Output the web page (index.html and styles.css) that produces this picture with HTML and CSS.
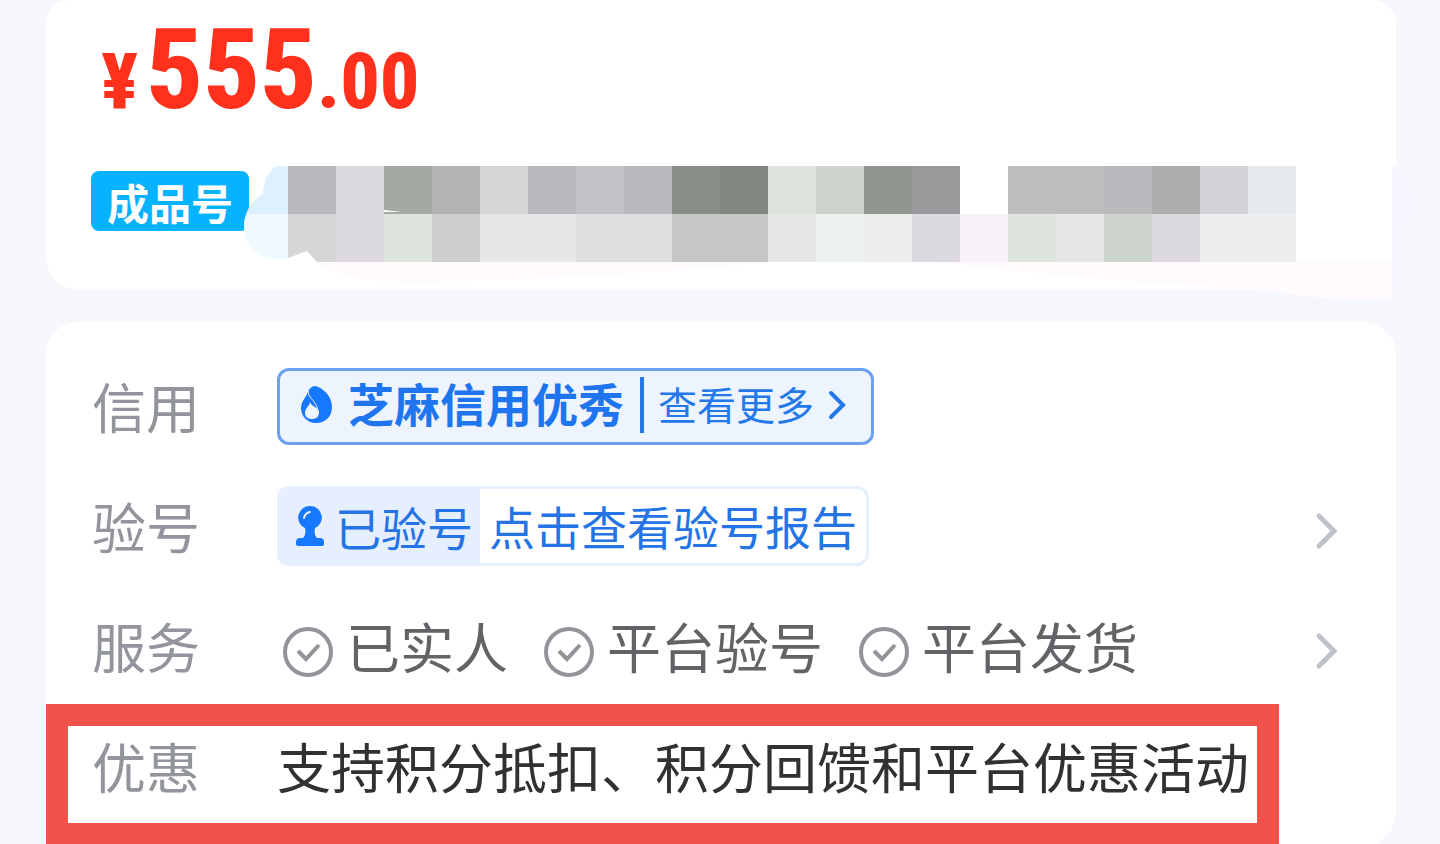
FILE: index.html
```html
<!DOCTYPE html>
<html lang="zh-CN">

<head>
    <meta charset="UTF-8">
    <meta name="viewport" content="width=device-width, initial-scale=1.0">
    <title>商品详情</title>
    <link rel="stylesheet" href="styles.css">
</head>

<body>
    <main class="page">
        <section class="card summary">
            <p class="price"><span class="price-small currency">¥</span>555<span class="price-small">.00</span></p>
            <div class="title-row">
                <span class="tag">成品号</span>
                <svg class="mosaic" viewBox="0 0 1184 144" width="1184" height="144" aria-hidden="true">
                    <!-- soft brush edges around the blocks -->
                    <path d="M72 96C110 122 180 116 240 114C360 110 440 104 530 96Z" fill="#fefafe" />
                    <path d="M690 96C780 106 860 114 960 120C1060 126 1100 140 1148 132V96Z" fill="#fefafe" />
                    <path d="M1148 0C1176 6 1182 50 1156 68C1166 90 1162 112 1148 132Z" fill="#f6f6fe" />
                    <path d="M44 0H32C22 8 19 18 19 28C8 34 0 46 0 60L4 48H44Z" fill="#dcf0ff" />
                    <path d="M4 48H44V92C18 98 0 82 0 60Q0 53 4 48Z" fill="#effaff" />
                    <g shape-rendering="crispEdges">
                        <path d="M44 0h48v48H44z" fill="#bbb8bd" />
                        <path d="M92 0h48v96H92z" fill="#dddadf" />
                        <path d="M140 0h48v48h-48z" fill="#a4a9a3" />
                        <path d="M188 0h48v48h-48z" fill="#b3b3b3" />
                        <path d="M236 0h48v48h-48z" fill="#d6d6d6" />
                        <path d="M284 0h48v48h-48z" fill="#bbb8bd" />
                        <path d="M332 0h48v48h-48z" fill="#c5c2c7" />
                        <path d="M380 0h48v48h-48z" fill="#bbb8bd" />
                        <path d="M428 0h48v48h-48z" fill="#8a8e89" />
                        <path d="M476 0h48v48h-48z" fill="#828680" />
                        <path d="M524 0h48v48h-48z" fill="#dde3dd" />
                        <path d="M572 0h48v48h-48z" fill="#cdd3cd" />
                        <path d="M620 0h48v48h-48z" fill="#929691" />
                        <path d="M668 0h48v48h-48z" fill="#9c999d" />
                        <path d="M764 0h96v48h-96z" fill="#bdbdbd" />
                        <path d="M860 0h48v48h-48z" fill="#bbb8bd" />
                        <path d="M908 0h48v48h-48z" fill="#adadad" />
                        <path d="M956 0h48v48h-48z" fill="#d5d2d7" />
                        <path d="M1004 0h48v48h-48z" fill="#e6eaef" />
                        <path d="M44 48h48v48H44z" fill="#d6d6d6" />
                        <path d="M140 48h48v48h-48z" fill="#dde3dd" />
                        <path d="M188 48h48v48h-48z" fill="#cfcfcf" />
                        <path d="M236 48h96v48h-96z" fill="#e7e7e7" />
                        <path d="M332 48h96v48h-96z" fill="#dedede" />
                        <path d="M428 48h96v48h-96z" fill="#c6c6c6" />
                        <path d="M524 48h48v48h-48z" fill="#e6e6e6" />
                        <path d="M572 48h48v48h-48z" fill="#edf2ee" />
                        <path d="M620 48h48v48h-48z" fill="#eeeeee" />
                        <path d="M668 48h48v48h-48z" fill="#dddadf" />
                        <path d="M716 48h48v48h-48z" fill="#f7f2f7" />
                        <path d="M764 48h48v48h-48z" fill="#dde3dd" />
                        <path d="M812 48h48v48h-48z" fill="#e6e6e6" />
                        <path d="M860 48h48v48h-48z" fill="#cdd3cd" />
                        <path d="M908 48h48v48h-48z" fill="#dddadf" />
                        <path d="M956 48h96v48h-96z" fill="#eeeeee" />
                    </g>
                    <path d="M44 92L63 85L74 97H44Z" fill="#ffffff" />
                    <path d="M140 44L158 46H140Z" fill="#ffffff" />
                </svg>
            </div>
        </section>

        <section class="card details">
            <div class="row">
                <span class="label">信用</span>
                <a class="credit" href="#">
                    <svg class="drop" viewBox="0 0 32 38" width="32" height="38" aria-hidden="true">
                        <path d="M15 0C24 2 32 11 32 21C32 31 25 37 16 37C7 37 1 30 1 22C1 15 6 12 8 6C9 3 12 0 15 0Z" fill="#1677ff" />
                        <path d="M10 16C9 21 5 22 5 27C5 31 8 33 12 33C16 33 19 31 19 26C18 21 12 21 10 16Z" fill="#eef4fe" />
                        <path d="M8 5C8 13 18 15 18 27" fill="none" stroke="#eef4fe" stroke-width="1" />
                    </svg>
                    <strong class="credit-level">芝麻信用优秀</strong>
                    <span class="credit-more">查看更多</span>
                    <svg viewBox="0 0 20 30" width="20" height="30" aria-hidden="true">
                        <path d="M3 3L15 15L3 27" fill="none" stroke="#2478ea" stroke-width="4" stroke-linecap="round" />
                    </svg>
                </a>
            </div>
            <div class="row">
                <span class="label">验号</span>
                <a class="report" href="#">
                    <span class="report-state">
                        <svg viewBox="0 0 30 42" width="30" height="42" aria-hidden="true">
                            <path d="M15 1A11.500 11.500 0 0 1 20 23C19 28 20 31 22 33H25Q29 33 29 37V39Q29 41 26 41H3Q1 41 1 39V37Q1 33 5 33H8C10 31 11 28 10 23A11.500 11.500 0 0 1 15 1Z" fill="#1677ff" />
                            <path d="M9 13Q10 8 15 7" fill="none" stroke="#e6effe" stroke-width="2" stroke-linecap="round" />
                        </svg>
                        已验号
                    </span>
                    <span class="report-link">点击查看验号报告</span>
                </a>
                <svg class="arrow" viewBox="0 0 22 36" width="22" height="36" aria-hidden="true">
                    <path d="M3 3L18 18L3 33" />
                </svg>
            </div>
            <div class="row">
                <span class="label">服务</span>
                <ul class="services">
                    <li>
                        <svg class="check" viewBox="0 0 52 52" width="52" height="52" aria-hidden="true">
                            <circle cx="26" cy="26" r="23" />
                            <path d="M16 25L24 33L37 19" />
                        </svg>
                        已实人
                    </li>
                    <li>
                        <svg class="check" viewBox="0 0 52 52" width="52" height="52" aria-hidden="true">
                            <circle cx="26" cy="26" r="23" />
                            <path d="M16 25L24 33L37 19" />
                        </svg>
                        平台验号
                    </li>
                    <li>
                        <svg class="check" viewBox="0 0 52 52" width="52" height="52" aria-hidden="true">
                            <circle cx="26" cy="26" r="23" />
                            <path d="M16 25L24 33L37 19" />
                        </svg>
                        平台发货
                    </li>
                </ul>
                <svg class="arrow" viewBox="0 0 22 36" width="22" height="36" aria-hidden="true">
                    <path d="M3 3L18 18L3 33" />
                </svg>
            </div>
            <div class="row highlight">
                <span class="label">优惠</span>
                <span class="promo">支持积分抵扣、积分回馈和平台优惠活动</span>
            </div>
        </section>
    </main>
</body>

</html>
```
FILE: styles.css
```css
* {
    margin: 0;
    padding: 0;
    box-sizing: border-box;
}

body {
    background: #f5f7fb;
    font-family: "Noto Sans CJK SC", sans-serif;
    overflow-x: hidden;
}

svg {
    flex-shrink: 0;
}

.page {
    padding: 0 44px 0 46px;
}

.card {
    background: #fff;
    border-radius: 32px;
}

.summary {
    border-top-left-radius: 24px;
    border-top-right-radius: 24px;
    padding: 18px 0 28px 45px;
}

.price {
    color: #ff311c;
    font-family: "Roboto Condensed", Roboto, sans-serif;
    font-size: 112px;
    font-weight: 800;
    line-height: 104px;
    padding-left: 10px;
}

.price-small {
    font-size: 78px;
}

.currency {
    margin-right: 8px;
}

.title-row {
    display: flex;
    align-items: flex-start;
    margin-top: 32px;
    height: 96px;
}

.tag {
    flex-shrink: 0;
    width: 158px;
    height: 60px;
    margin-top: 5px;
    border-radius: 8px;
    background: #07b2ff;
    color: #fff;
    font-size: 42px;
    font-weight: bold;
    line-height: 62px;
    text-align: center;
}

.mosaic {
    position: relative;
    margin-left: -5px;
}

.details {
    margin-top: 32px;
    padding-top: 24px;
}

.row {
    display: flex;
    align-items: center;
    height: 120px;
    padding: 0 58px 0 46px;
}

.label {
    width: 185px;
    flex-shrink: 0;
    color: #92959c;
    font-size: 54px;
    line-height: 80px;
}

a {
    text-decoration: none;
}

.credit {
    display: flex;
    align-items: center;
    height: 77px;
    padding: 0 23px 2px 20px;
    border: 3px solid #6ba1ee;
    border-radius: 12px;
    background: #eef4fe;
    color: #2478ea;
}

.credit-level {
    margin-left: 16px;
    padding: 0 16px 6px 0;
    border-right: 4px solid #2478ea;
    color: #1f75f0;
    font-size: 46px;
    line-height: 50px;
}

.credit-more {
    margin: 0 14px 0 14px;
    padding-bottom: 4px;
    font-size: 39px;
    line-height: 50px;
}

.report {
    display: flex;
    height: 80px;
    border: 3px solid #e6effe;
    border-radius: 12px;
    color: #2474e6;
    font-size: 46px;
    line-height: 76px;
}

.report-state {
    display: flex;
    align-items: center;
    gap: 10px;
    width: 200px;
    padding-left: 15px;
    background: #e6effe;
}

.report-link {
    padding: 0 9px;
    line-height: 72px;
}

.arrow {
    margin: 10px 0 0 auto;
}

.arrow path {
    fill: none;
    stroke: #bec3cb;
    stroke-width: 5px;
    stroke-linecap: round;
}

.services {
    display: flex;
    gap: 35px;
    margin-left: 5px;
    list-style: none;
    color: #626366;
    font-size: 54px;
    line-height: 80px;
}

.services li {
    display: flex;
    align-items: center;
    gap: 12px;
}

.check {
    margin-top: 12px;
    fill: none;
    stroke: #919499;
    stroke-width: 4px;
}

.highlight {
    align-items: flex-start;
    width: fit-content;
    height: 141px;
    margin-top: -2px;
    padding: 0 8px 0 24px;
    border: 22px solid #ef534c;
}

.promo {
    color: #303133;
    font-size: 54px;
    line-height: 80px;
}
```
